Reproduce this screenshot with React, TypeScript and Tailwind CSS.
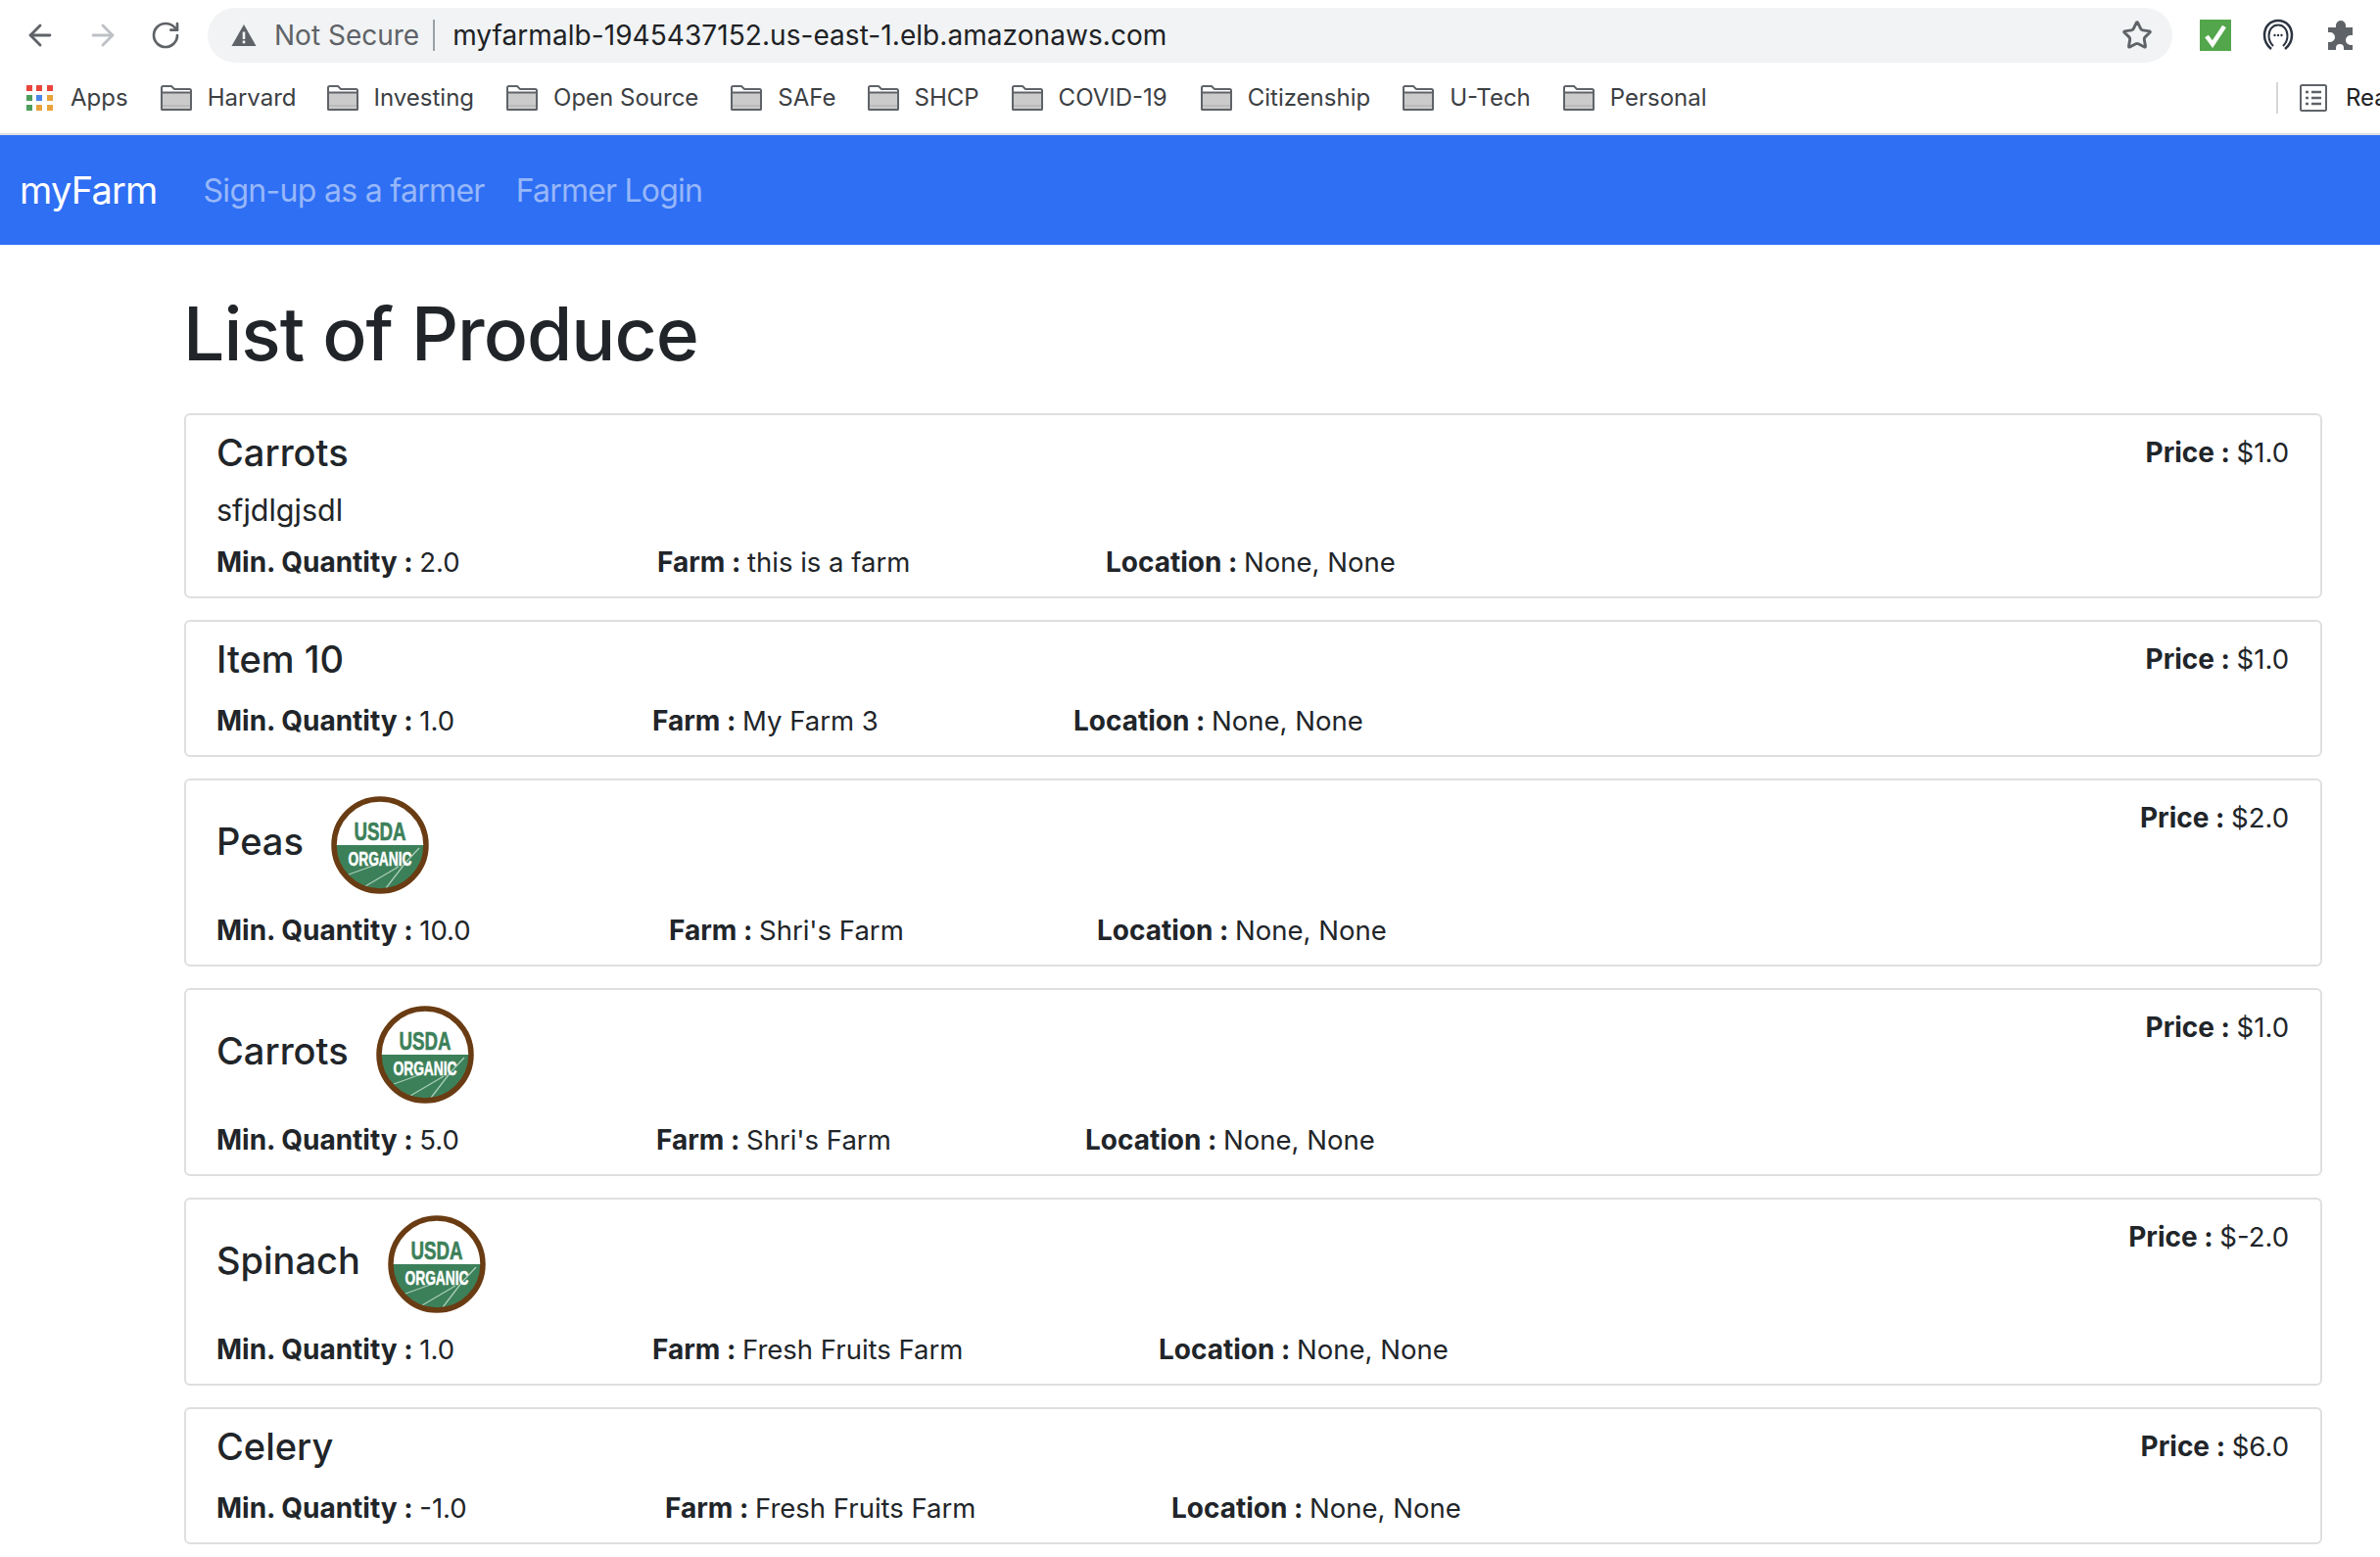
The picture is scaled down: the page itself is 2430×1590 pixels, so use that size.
import { ArrowLeft, ArrowRight, RotateCw, Star } from "lucide-react";

const bookmarks = [
  { name: "Harvard", className: "ml-[33px]" },
  { name: "Investing", className: "ml-[31px]" },
  { name: "Open Source", className: "ml-[33px]" },
  { name: "SAFe", className: "ml-[33px]" },
  { name: "SHCP", className: "ml-[32px]" },
  { name: "COVID-19", className: "ml-[33px]" },
  { name: "Citizenship", className: "ml-[34px]" },
  { name: "U-Tech", className: "ml-[33px]" },
  { name: "Personal", className: "ml-[33px]" },
];

const items = [
  { name: "Carrots", desc: "sfjdlgjsdl", price: "$1.0", qty: "2.0", farm: "this is a farm", farmGap: "w-[450px]", locGap: "w-[458px]", organic: false, head: "h-[55px]" },
  { name: "Item 10", price: "$1.0", qty: "1.0", farm: "My Farm 3", farmGap: "w-[445px]", locGap: "w-[430px]", organic: false, head: "h-[65px]" },
  { name: "Peas", price: "$2.0", qty: "10.0", farm: "Shri's Farm", farmGap: "w-[462px]", locGap: "w-[437px]", organic: true, head: "h-[117px]" },
  { name: "Carrots", price: "$1.0", qty: "5.0", farm: "Shri's Farm", farmGap: "w-[449px]", locGap: "w-[438px]", organic: true, head: "h-[117px]" },
  { name: "Spinach", price: "$-2.0", qty: "1.0", farm: "Fresh Fruits Farm", farmGap: "w-[445px]", locGap: "w-[517px]", organic: true, head: "h-[117px]" },
  { name: "Celery", price: "$6.0", qty: "-1.0", farm: "Fresh Fruits Farm", farmGap: "w-[458px]", locGap: "w-[517px]", organic: false, head: "h-[65px]" },
];

function Folder() {
  return (
    <svg width="32" height="26" viewBox="0 0 32 26" className="shrink-0">
      <path d="M1 24V2.5C1 1.7 1.7 1 2.5 1h8.5l3 3h15.5c.8 0 1.5.7 1.5 1.5V24c0 .6-.4 1-1 1H2c-.6 0-1-.4-1-1z" fill="#fff" stroke="#5f6368" strokeWidth="2" />
      <path d="M2 8h28v17H2z" fill="#cbcbcb" />
      <path d="M1 7.500h30" stroke="#5f6368" strokeWidth="2" />
      <path d="M1 21h30" stroke="#aaa" strokeWidth="1" />
      <path d="M1 5v19c0 .6.4 1 1 1h28c.6 0 1-.4 1-1V5" fill="none" stroke="#5f6368" strokeWidth="2" />
    </svg>
  );
}

function AppsGrid() {
  const colors = ["#e8453c", "#e8453c", "#e8453c", "#4f9d5c", "#4a86e8", "#e8a33c", "#4f9d5c", "#e8a33c", "#e8a33c"];
  return (
    <div className="grid grid-cols-3 gap-[4px] w-[27px] shrink-0">
      {colors.map((c, i) => (
        <span key={i} className="w-[6px] h-[6px]" style={{ backgroundColor: c }} />
      ))}
    </div>
  );
}

function OrganicSeal() {
  return (
    <svg width="100" height="100" viewBox="0 0 100 100" className="shrink-0">
      <circle cx="50" cy="50" r="46" fill="#fff" />
      <path d="M3.700 50 H96.300 A46.300 46.300 0 0 1 3.700 50 Z" fill="#3c8059" />
      <path d="M18 80 L46 70 M35 92 L69 72 M56 94 L76 68 L90 53" stroke="#a9cdb9" strokeWidth="1.300" fill="none" />
      <text x="50" y="45" textAnchor="middle" fontFamily="Liberation Sans, sans-serif" fontWeight="700" fontSize="26" fill="#3c8059" stroke="#3c8059" strokeWidth="0.600" textLength="53" lengthAdjust="spacingAndGlyphs">USDA</text>
      <text x="50" y="71" textAnchor="middle" fontFamily="Liberation Sans, sans-serif" fontWeight="700" fontSize="20" fill="#fff" stroke="#fff" strokeWidth="0.500" textLength="65" lengthAdjust="spacingAndGlyphs">ORGANIC</text>
      <circle cx="50" cy="50" r="47" fill="none" stroke="#6a3c13" strokeWidth="5.500" />
    </svg>
  );
}

export default function App() {
  return (
    <div className="w-[2430px] h-[1590px] overflow-hidden bg-white text-[#212529] font-['Inter',sans-serif]">
      {/* browser toolbar */}
      <div className="h-[72px] flex items-center pl-[24px] relative">
        <ArrowLeft size={34} strokeWidth={2} className="text-[#5f6368] shrink-0" />
        <ArrowRight size={34} strokeWidth={2} className="text-[#bdc1c6] shrink-0 ml-[30px]" />
        <RotateCw size={32} strokeWidth={2} className="text-[#5f6368] shrink-0 ml-[31px]" />
        <div className="ml-[27px] w-[2006px] h-[56px] rounded-full bg-[#f1f3f4] flex items-center pl-[24px] pr-[20px]">
          <svg width="26" height="24" viewBox="0 0 26 24" className="shrink-0">
            <path d="M13 1 L25.500 23 H.5 Z" fill="#5f6368" />
            <rect x="11.700" y="8.500" width="2.600" height="7.500" fill="#f1f3f4" />
            <rect x="11.700" y="17.500" width="2.600" height="2.800" fill="#f1f3f4" />
          </svg>
          <span className="ml-[18px] text-[28px] text-[#5f6368] leading-none whitespace-nowrap">Not Secure</span>
          <span className="ml-[14px] w-[2px] h-[32px] bg-[#9aa0a6]" />
          <span className="ml-[18px] text-[28px] text-[#202124] leading-none whitespace-nowrap tracking-[0.06px]">myfarmalb-1945437152.us-east-1.elb.amazonaws.com</span>
          <Star size={32} strokeWidth={2.200} className="text-[#5f6368] ml-auto shrink-0" />
        </div>
        <div className="ml-[28px] w-[32px] h-[32px] bg-[#53a64b] flex items-center justify-center shrink-0">
          <svg width="26" height="26" viewBox="0 0 26 26">
            <path d="M4 14l6 8L22 4" fill="none" stroke="#fff" strokeWidth="4.500" />
          </svg>
        </div>
        <svg width="32" height="34" viewBox="0 0 32 34" className="ml-[32px] shrink-0">
          <path d="M9 31C4 27 2 23 2 17 2 8 8 2 16 2s14 6 14 15c0 6-2 10-7 14" fill="none" stroke="#2b3440" strokeWidth="2.500" />
          <path d="M11 28C8 25 6.500 22 6.500 17.500 6.500 11 10.500 6.500 16 6.500S25.500 11 25.500 17.500c0 4.500-1.500 7.500-4.500 10.500" fill="none" stroke="#2b3440" strokeWidth="2" />
          <circle cx="12.500" cy="17" r="1.200" fill="#2b3440" />
          <circle cx="16" cy="17" r="1.200" fill="#2b3440" />
          <circle cx="19.500" cy="17" r="1.200" fill="#2b3440" />
        </svg>
        <svg width="30" height="32" viewBox="0 0 30 32" className="ml-[34px] shrink-0">
          <path d="M1 8h8V6a5 5 0 0 1 10 0v2h7v8h-2a5 5 0 0 0 0 10h2v5H17v-2a4 4 0 0 0-8 0v2H1v-8h2a5 5 0 0 0 0-10H1z" fill="#5f6368" />
        </svg>
      </div>

      {/* bookmarks bar */}
      <div className="h-[64px] flex items-center pl-[27px] pb-[8px] text-[24px] text-[#3c4043] leading-none whitespace-nowrap overflow-hidden">
        <AppsGrid />
        <span className="ml-[18px]">Apps</span>
        {bookmarks.map((b) => (
          <div key={b.name} className={`flex items-center gap-[16px] ${b.className}`}>
            <Folder />
            <span>{b.name}</span>
          </div>
        ))}
        <span className="ml-auto w-[2px] h-[32px] bg-[#d5d7da] shrink-0" />
        <svg width="28" height="28" viewBox="0 0 28 28" className="ml-[22px] shrink-0">
          <rect x="1" y="1" width="26" height="26" rx="1.500" fill="none" stroke="#5f6368" strokeWidth="2" />
          <path d="M6 8h3M12 8h10M6 14h3M12 14h10M6 20h3M12 20h10" stroke="#5f6368" strokeWidth="2.500" />
        </svg>
        <span className="ml-[19px] w-[35px] shrink-0 text-[#202124]">Rea</span>
      </div>
      <div className="h-[2px] bg-[#dedfe1]" />

      {/* navbar */}
      <nav className="h-[112px] bg-[#2e6ff4] flex items-center pl-[20px] pt-[1px]">
        <span className="text-[38px] text-white tracking-[-0.8px]">myFarm</span>
        <span className="ml-[47px] text-[32px] text-[#97b7f9] tracking-[-0.7px]">Sign-up as a farmer</span>
        <span className="ml-[32px] text-[32px] text-[#97b7f9] tracking-[-0.8px]">Farmer Login</span>
      </nav>

      {/* page */}
      <main className="pl-[188px] pr-[59px]">
        <h1 className="text-[75px] leading-[90px] font-medium h-[172px] pt-[46px] tracking-[-1px] -ml-[1px]">List of Produce</h1>
        <div className="flex flex-col gap-[22px]">
          {items.map((item, i) => (
            <div key={i} className="border-2 border-[#dfdfdf] rounded-[6px] pl-[31px] pr-[32px] pt-[16px] pb-[15px]">
              <div className={`flex justify-between ${item.head}`}>
                <div className="flex items-center gap-[28px] self-start">
                  <span className="text-[38px] leading-[44px] pb-[8px] font-medium whitespace-nowrap">{item.name}</span>
                  {item.organic && <OrganicSeal />}
                </div>
                <span className="text-[28px] leading-[44px] whitespace-nowrap">
                  <b className="font-bold">Price : </b>
                  <span className="text-[27.5px]">{item.price}</span>
                </span>
              </div>
              {item.desc && <div className="text-[30.5px] leading-[52px] h-[59px]">{item.desc}</div>}
              <div className="flex text-[28px] leading-[40px] whitespace-nowrap">
                <span className={item.farmGap}><b className="font-bold">Min. Quantity : </b><span className="text-[27.5px]">{item.qty}</span></span>
                <span className={item.locGap}><b className="font-bold">Farm : </b><span className="text-[27.5px]">{item.farm}</span></span>
                <span><b className="font-bold">Location : </b><span className="text-[27.5px]">None, None</span></span>
              </div>
            </div>
          ))}
        </div>
      </main>
    </div>
  );
}
